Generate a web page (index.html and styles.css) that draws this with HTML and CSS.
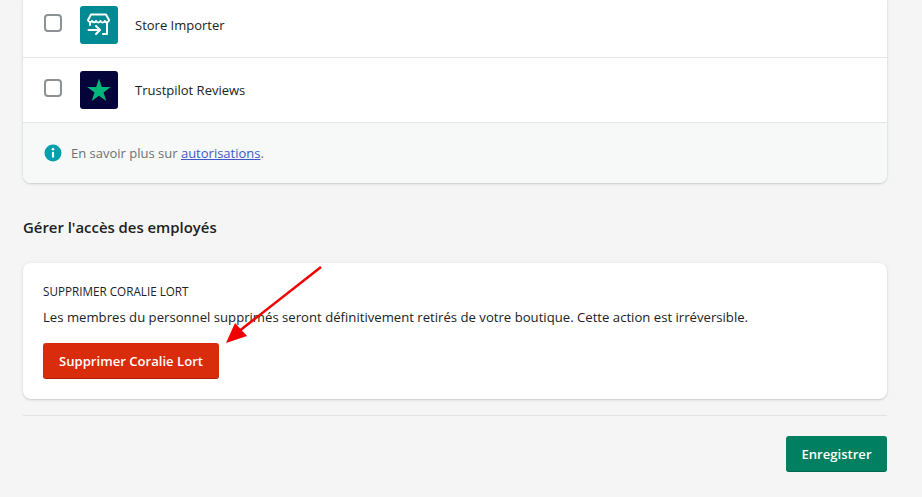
FILE: index.html
```html
<!DOCTYPE html>
<html lang="fr">
<head>
<meta charset="utf-8">
<title>Gérer l'accès des employés</title>
<link rel="stylesheet" href="styles.css">
</head>
<body>
<main class="page">
  <section class="card perms">
    <div class="row">
      <span class="check"></span>
      <span class="app app-store">
        <svg width="26" height="26" viewBox="0 0 26 26" fill="none" stroke="#fff" stroke-width="2" stroke-linecap="round" stroke-linejoin="round">
          <path d="M5 2.500h15l3 5.500a2.200 2.200 0 0 1-4.200 1 2.300 2.300 0 0 1-4.300 0 2.300 2.300 0 0 1-4.300 0 2.300 2.300 0 0 1-4.200 0 2.200 2.200 0 0 1-4-1z"/>
          <path d="M4 11v2M21 11v11h-4M2.500 18h11M10 14l4 4-4 4"/>
        </svg>
      </span>
      <span class="name">Store Importer</span>
    </div>
    <div class="row">
      <span class="check"></span>
      <span class="app app-trust">
        <svg width="26" height="26" viewBox="0 0 26 26"><path fill="#00b67a" d="M13 1.500l2.800 8.600h9l-7.300 5.300 2.800 8.600-7.300-5.300-7.300 5.300 2.800-8.600-7.300-5.300h9z"/></svg>
      </span>
      <span class="name">Trustpilot Reviews</span>
    </div>
    <div class="foot">
      <svg class="info" width="18" height="18" viewBox="0 0 18 18"><circle cx="9" cy="9" r="8.500" fill="#00a0ac"/><circle cx="9" cy="5.200" r="1.300" fill="#fff"/><rect x="7.900" y="7.700" width="2.200" height="6" rx="1" fill="#fff"/></svg>
      <span class="foot-text">En savoir plus sur <a href="#">autorisations</a>.</span>
    </div>
  </section>

  <h2 class="heading">Gérer l'accès des employés</h2>

  <section class="card danger">
    <h3 class="title">SUPPRIMER CORALIE LORT</h3>
    <p class="desc">Les membres du personnel supprimés seront définitivement retirés de votre boutique. Cette action est irréversible.</p>
    <button class="btn btn-red">Supprimer Coralie Lort</button>
  </section>

  <hr class="rule">

  <div class="actions"><button class="btn btn-green">Enregistrer</button></div>
</main>
<svg class="arrow" width="110" height="90" viewBox="0 0 110 90">
  <line x1="103" y1="5" x2="20" y2="70" stroke="#f00000" stroke-width="2.500"/>
  <path d="M8 81L17 61L29 74Z" fill="#f00000"/>
</svg>
</body>
</html>
```
FILE: styles.css
```css
* { box-sizing: border-box; }
html, body { margin: 0; height: 497px; overflow: hidden; }
body {
  position: relative;
  background: #f5f5f5;
  font-family: "Open Sans", "Noto Sans", sans-serif;
  font-size: 13px;
  color: #202223;
}
.page { padding: 0 35px 0 23px; margin-top: -7px; }
.card {
  background: #fff;
  border-radius: 8px;
  box-shadow: 0 0 5px rgba(23,24,24,.05), 0 1px 2px rgba(0,0,0,.15);
}
.perms { overflow: hidden; }
.row {
  display: flex;
  align-items: center;
  height: 65px;
  padding-left: 21px;
  border-bottom: 1px solid #e3e5e7;
}
.check {
  width: 18px;
  height: 18px;
  margin-bottom: 4px;
  border: 2px solid #8c9196;
  border-radius: 4px;
  background: #fff;
}
.app {
  display: flex;
  align-items: center;
  justify-content: center;
  width: 38px;
  height: 38px;
  margin-left: 18px;
  border-radius: 3px;
}
.app-store { background: #008a93; }
.app-trust { background: #04033a; }
.name { margin-left: 17px; }
.foot {
  display: flex;
  align-items: center;
  gap: 9px;
  height: 60px;
  padding-left: 21px;
  background: #f7f8f8;
}
.foot-text { color: #6d7175; }
.foot-text a { color: #3d59c9; text-decoration: underline; }
.heading {
  margin: 33px 0 0;
  height: 22px;
  line-height: 22px;
  font-size: 14.900px;
  font-weight: 600;
}
.danger { margin-top: 25px; height: 136px; padding: 19px 20px 20px; }
.title {
  margin: 0;
  height: 18px;
  line-height: 18px;
  font-size: 11.700px;
  font-weight: 500;
}
.desc { margin: 8px 0 0; height: 18px; line-height: 18px; font-size: 13.150px; }
.btn {
  height: 36px;
  border: 0;
  border-radius: 3px;
  color: #fff;
  font: 600 13.100px "Open Sans", "Noto Sans", sans-serif;
}
.btn-red {
  width: 176px;
  margin-top: 17px;
  background: #d82c0d;
  box-shadow: inset 0 -1px 0 rgba(0,0,0,.2);
}
.btn-green {
  width: 101px;
  background: #008060;
  box-shadow: inset 0 -1px 0 rgba(0,0,0,.2);
}
.rule { margin: 16px 0 0; border: 0; border-top: 1px solid #e1e3e5; }
.actions { display: flex; justify-content: flex-end; margin-top: 20px; }
.arrow { position: absolute; left: 218px; top: 262px; pointer-events: none; }
```
